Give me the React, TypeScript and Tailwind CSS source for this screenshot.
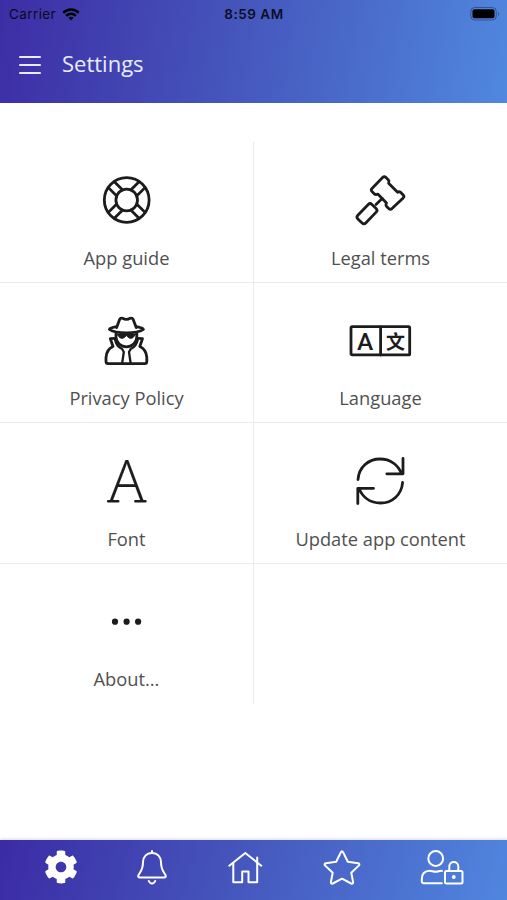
import React from "react";
import { FaCog } from "react-icons/fa";

function TileIcon({ children }: { children: React.ReactNode }) {
  return (
    <svg
      className="mr-px h-16 w-16 overflow-visible"
      viewBox="0 0 64 64"
      fill="none"
      stroke="currentColor"
      strokeWidth="2.8"
      strokeLinecap="round"
      strokeLinejoin="round"
    >
      {children}
    </svg>
  );
}

function GuideIcon() {
  return (
    <TileIcon>
      <circle cx="32.7" cy="32" r="22.4" />
      <circle cx="32.7" cy="32" r="10.8" />
      {[45, 135, 225, 315].map((deg) => (
        <path key={deg} d="M42.6 27.8H54.4M42.6 36.2H54.4" transform={`rotate(${deg} 32.7 32)`} />
      ))}
    </TileIcon>
  );
}

function GavelIcon() {
  return (
    <TileIcon>
      <path d="M34.6 9.6Q36.3 8 38 9.6L40.4 12Q41.6 13.3 40.6 15.2L49.6 24.2Q51.3 23.2 52.8 24.5L55.2 26.9Q56.6 28.4 55.2 29.9L44 40.6Q42.4 42 40.8 40.6L38.6 38.4Q37.4 37 38.5 34.9L29.8 26.1Q27.8 27.2 26.4 25.9L24 23.5Q22.6 22 24 20.4Z" />
      <path d="M34.2 30.4L28 36.4" />
      <rect x="8.9" y="40.2" width="20.2" height="11" rx="2.6" transform="rotate(-46 19 45.7)" />
    </TileIcon>
  );
}

function SpyIcon() {
  return (
    <TileIcon>
      <path d="M22.6 18.6L25.6 10.6Q26.5 8.4 28.6 9.3Q32.4 11.6 36.2 9.3Q38.3 8.4 39.2 10.6L42.2 18.6" />
      <path d="M22.4 17.7C18.5 18.4 16 19.3 15.4 20.4C19 22.8 25 23.9 32.4 23.9S45.8 22.8 49.4 20.4C48.8 19.3 46.3 18.4 42.4 17.7" />
      <path d="M22 24.5V28C22 33.5 27 37.8 32.4 37.8S42.8 33.5 42.8 28V24.5" />
      <path
        d="M23 25H41.8L39.6 28Q38.2 29.8 35.9 29.2Q34 28.6 32.4 26.4Q30.8 28.6 28.9 29.2Q26.6 29.8 25.2 28Z"
        fill="currentColor"
        strokeWidth="1"
      />
      <path d="M20.6 29.4L16.3 29.6L19 37.5C14.5 39.5 12.3 43.5 12 48.5V52.5Q12 54.7 14.2 54.7H50.6Q52.8 54.7 52.8 52.5V48.5C52.5 43.500 50.3 39.5 45.8 37.5L48.5 29.6L44.2 29.4" />
      <path d="M21 30.5C22 35.500 24.800 38.700 28 39.800L29.800 43L28.200 54M43.800 30.500C42.800 35.500 40 38.700 36.800 39.800L35 43L36.600 54" strokeWidth="2.300" />
    </TileIcon>
  );
}

function LanguageIcon() {
  return (
    <TileIcon>
      <rect x="3" y="17.6" width="58.7" height="28.3" rx="1.2" />
      <path d="M32.600 18V46" />
      <g fill="currentColor" stroke="none" textAnchor="middle">
        <text x="17" y="40.6" className="font-['Roboto'] text-[24.5px] font-medium">A</text>
        <text x="47.4" y="39.8" className="font-['Noto_Sans_CJK_SC',sans-serif] text-[19px] font-bold">文</text>
      </g>
    </TileIcon>
  );
}

// light capital on two slab feet
function FontIcon() {
  return (
    <TileIcon>
      <text
        x="32.7"
        y="53"
        textAnchor="middle"
        fill="currentColor"
        strokeWidth=".2"
        className="font-['Open_Sans'] text-[58px] font-light"
      >
        A
      </text>
      <path d="M14.2 52.3H24.2M41.4 52.3H51.4" strokeWidth="2.600" />
    </TileIcon>
  );
}

function RefreshIcon() {
  return (
    <TileIcon>
      <path d="M10 30.5C11 18 20.5 10 32 10C42.5 10 50 16 53.5 24.5M55 9.5V24.8H38.8" />
      <path d="M54.6 33.5C53.6 46 44 54 32.5 54C22 54 14.5 48 11 39.5M9.8 54.5V39.3H25.5" />
    </TileIcon>
  );
}

function DotsIcon() {
  return (
    <TileIcon>
      <g fill="currentColor" stroke="none">
        <circle cx="21" cy="31.7" r="3.1" />
        <circle cx="32.6" cy="31.7" r="3.1" />
        <circle cx="44.1" cy="31.7" r="3.1" />
      </g>
    </TileIcon>
  );
}

const tiles = [
  { label: "App guide", icon: <GuideIcon /> },
  { label: "Legal terms", icon: <GavelIcon /> },
  { label: "Privacy Policy", icon: <SpyIcon /> },
  { label: "Language", icon: <LanguageIcon /> },
  { label: "Font", icon: <FontIcon /> },
  { label: "Update app content", icon: <RefreshIcon /> },
  { label: "About...", icon: <DotsIcon /> },
];

function StatusBar() {
  return (
    <div className="grid h-7 grid-cols-3 items-center pl-[9px] pr-[7px] font-['Inter'] text-black/85">
      <div className="flex items-center gap-[6px]">
        <span className="text-[13.5px] tracking-[0.4px]">Carrier</span>
        <svg className="h-[13px] w-[18px]" viewBox="0 0 19 14" fill="none" stroke="black" strokeWidth="2.6">
          <path d="M1.2 5.2C6 .4 13 .4 17.8 5.2" />
          <path d="M4.3 8.4C7.2 5.5 11.8 5.5 14.7 8.4" />
          <path d="M9.5 13.5L6.7 10.6Q9.5 8.3 12.3 10.6Z" fill="black" stroke="none" />
        </svg>
      </div>
      <div className="-ml-[1px] text-center text-[13.5px] font-semibold tracking-[0.5px]">8:59 AM</div>
      <svg className="h-[14px] w-[30px] justify-self-end" viewBox="0 0 30 14">
        <rect x=".8" y=".5" width="25.5" height="12.5" rx="4" fill="none" stroke="black" strokeOpacity=".35" />
        <rect x="2.5" y="2.2" width="22" height="9" rx="2" />
        <path d="M28 5Q30 7 28 9Z" fillOpacity=".4" />
      </svg>
    </div>
  );
}

function BottomNav() {
  const line = "h-9 overflow-visible fill-none stroke-current stroke-2";
  return (
    <nav className="flex h-[60px] items-start justify-between bg-linear-[105deg,#3b2ba5,#4659be_50%,#5086df] pl-[45px] pr-[43px] pt-[10px] text-white shadow-[0_-1px_3px_rgba(0,0,0,0.15)]">
      <FaCog className="-mx-px h-[34px] w-[34px]" />
      <svg className={`${line} w-[30px]`} viewBox="0 0 30 36" strokeLinecap="round" strokeLinejoin="round">
        <path d="M15 1V3M15 3C9.5 3 6 7 6 12C6 20 3.5 21.5 1.5 25Q.5 27.5 3 27.5H27Q29.5 27.5 28.5 25C26.5 21.5 24 20 24 12C24 7 20.5 3 15 3Z" />
        <path d="M11.8 31Q12.8 33.5 15 33.5T18.2 31" />
      </svg>
      <svg className={`${line} w-9`} viewBox="0 0 36 36" strokeLinecap="round" strokeLinejoin="round">
        <path d="M2.3 15.7L18.3 3L34.3 15.7M30.2 7.5V12" />
        <path d="M6.3 13V32.3H15.2V21.5H21.5V32.3H30.2V12.5" />
      </svg>
      <svg className={`${line} w-[38px]`} viewBox="0 0 38 36" strokeLinejoin="round">
        <path d="M18.8 2.4Q20 .2 21.2 2.4L25.8 11.8L36.1 13.3Q38.3 13.9 36.8 15.6L29.3 22.8L31.1 32Q31.2 34.3 29.2 33.5L20 28.7L10.8 33.5Q8.8 34.3 8.9 32L10.7 22.8L3.2 15.6Q1.7 13.9 3.9 13.3L14.2 11.8Z" />
      </svg>
      <svg className={`${line} w-11`} viewBox="0 0 44 36" strokeLinecap="round" strokeLinejoin="round">
        <circle cx="15.7" cy="8.5" r="7.4" />
        <path d="M22 20.9C19.5 20.5 18.5 21.7 15.7 21.7S12 20.7 9.5 20.7C4.5 20.7 1.8 24 1.8 29V31Q1.8 33.3 4 33.3H21.8" />
        <rect x="25" y="21" width="17.5" height="12.6" rx="1.5" />
        <path d="M29.3 21V16.5C29.3 10.5 38.3 10.5 38.3 16.5V21" />
        <circle cx="33.8" cy="27" r="1.9" className="fill-current stroke-none" />
      </svg>
    </nav>
  );
}

export default function App() {
  return (
    <div className="flex h-[900px] w-[507px] flex-col overflow-hidden bg-white font-['Open_Sans',sans-serif]">
      <header className="h-[103px] bg-linear-[100deg,#3d2da5,#4659be_50%,#5088df]">
        <StatusBar />
        <div className="flex h-[72px] items-center pl-[19px] text-[#e9ebfb]">
          <button className="flex w-[22px] flex-col gap-[6px] pt-[2px]" aria-label="Menu">
            <span className="h-[2px] w-full rounded-full bg-current" />
            <span className="h-[2px] w-full rounded-full bg-current" />
            <span className="h-[2px] w-full rounded-full bg-current" />
          </button>
          <h1 className="-mt-[2px] ml-[21px] text-[22px]">Settings</h1>
        </div>
      </header>
      <main className="flex-1 pt-[39px]">
        <div className="grid auto-rows-[140.5px] grid-cols-[254px_253px] text-[#1c1c1c]">
          {tiles.map((tile, i) => (
            <div
              key={tile.label}
              className={`flex flex-col items-center border-[#ebebeb] pt-[26px] ${i % 2 === 0 ? "border-r" : ""} ${i < 6 ? "border-b" : ""}`}
            >
              <div className="flex h-16 items-center">{tile.icon}</div>
              <span className="mt-[12.5px] text-[18.3px] leading-[26px] text-[#505050]">{tile.label}</span>
            </div>
          ))}
        </div>
      </main>
      <BottomNav />
    </div>
  );
}
